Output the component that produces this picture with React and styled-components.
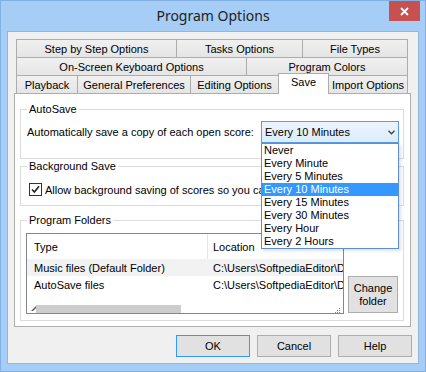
import React from "react";
import styled, { createGlobalStyle } from "styled-components";

const GlobalStyle = createGlobalStyle`
  html, body {
    margin: 0;
    padding: 0;
    width: 426px;
    height: 372px;
    overflow: hidden;
    background: #ffffff;
  }
  body {
    font-family: "Liberation Sans", Arial, sans-serif;
    font-size: 11px;
    color: #000;
  }
`;

const Shell = styled.div`
  width: 426px;
  height: 372px;
  box-sizing: border-box;
  background: #a6cdf6;
  border: 1px solid #83b0e2;
  display: flex;
  flex-direction: column;
`;

const TitleBar = styled.div`
  height: 30px;
  display: grid;
  grid-template-columns: 1fr auto 1fr;
  align-items: start;
`;

const Title = styled.div`
  grid-column: 2;
  line-height: 30px;
  font-family: "Noto Sans", "Open Sans", sans-serif;
  font-size: 14px;
  color: #222;
`;

const CloseButton = styled.div`
  grid-column: 3;
  justify-self: end;
  width: 31px;
  height: 20px;
  margin-right: 5px;
  background: #c75050;
  display: flex;
  align-items: center;
  justify-content: center;
`;

const Client = styled.div`
  flex: 1;
  margin: 0 6px 7px 6px;
  border: 1px solid #93b6de;
  background: #f0f0f0;
  padding: 7px 6px 0 6px;
  display: flex;
  flex-direction: column;
`;

const TabStrip = styled.div`
  margin: 0 4px 0 2px;
  display: flex;
  flex-direction: column;
`;

const TabRow = styled.div`
  display: flex;
  height: 18px;
`;

const Tab = styled.div`
  box-sizing: border-box;
  width: ${(p) => p.$w}px;
  height: 18px;
  border-top: 1px solid #acacac;
  border-left: 1px solid #acacac;
  &:last-child {
    border-right: 1px solid #acacac;
  }
  background: linear-gradient(#f0f0f0, #e5e5e5);
  display: flex;
  align-items: center;
  justify-content: center;
  white-space: nowrap;
`;

const ActiveTab = styled(Tab)`
  position: relative;
  z-index: 2;
  height: 21px;
  width: ${(p) => p.$w + 1}px;
  margin: -2px -1px -1px 0;
  border-right: 1px solid #acacac;
  background: #ffffff;
  align-items: flex-start;
  padding-top: 2px;
`;

const Panel = styled.div`
  box-sizing: border-box;
  height: 234px;
  margin-right: 1px;
  border: 1px solid #adadad;
  background: #ffffff;
  padding: 0 6px 0 5px;
  display: flex;
  flex-direction: column;
`;

const Group = styled.div`
  box-sizing: border-box;
  height: ${(p) => p.$h}px;
  margin-top: ${(p) => p.$top}px;
  border: 1px solid #dcdcdc;
  display: flex;
  flex-direction: column;
`;

const Legend = styled.div`
  align-self: flex-start;
  margin: -7px 0 0 6px;
  padding: 0 2px;
  line-height: 13px;
  background: #ffffff;
`;

const SaveRow = styled.div`
  margin-top: 5px;
  padding: 0 4px 0 6px;
  height: 22px;
  display: flex;
  align-items: center;
  white-space: nowrap;
`;

const SelectWrap = styled.div`
  position: relative;
  z-index: 10;
  margin-left: auto;
  width: 138px;
`;

const Select = styled.div`
  box-sizing: border-box;
  height: 22px;
  border: 1px solid #569de5;
  background: linear-gradient(#ecf4fc, #dcecfc);
  display: flex;
  align-items: center;
  justify-content: space-between;
  padding: 0 3px 0 3px;
`;

const DropList = styled.div`
  position: absolute;
  top: 100%;
  left: 0;
  width: 138px;
  box-sizing: border-box;
  border: 1px solid #5b8fd1;
  background: #ffffff;
  box-shadow: 2px 2px 3px rgba(0, 0, 0, 0.12);
`;

const DropItem = styled.div`
  height: 13px;
  line-height: 13px;
  padding-left: 2px;
  background: ${(p) => (p.$active ? "#3399ff" : "transparent")};
  color: ${(p) => (p.$active ? "#ffffff" : "#000")};
`;

const CheckRow = styled.div`
  margin-top: 10px;
  padding-left: 8px;
  display: flex;
  align-items: center;
  gap: 3px;
  white-space: nowrap;
  overflow: hidden;
`;

const CheckBox = styled.div`
  box-sizing: border-box;
  width: 13px;
  height: 13px;
  flex: none;
  border: 1px solid #333333;
  background: #ffffff;
  display: flex;
  align-items: center;
  justify-content: center;
`;

const FolderRow = styled.div`
  margin-top: 6px;
  padding-left: 5px;
  display: flex;
  align-items: flex-end;
  gap: 4px;
`;

const ListView = styled.div`
  box-sizing: border-box;
  width: 318px;
  height: 81px;
  border: 1px solid #828790;
  background: #ffffff;
  display: flex;
  flex-direction: column;
  overflow: hidden;
`;

const ListLine = styled.div`
  display: grid;
  grid-template-columns: 181px 1fr;
  height: ${(p) => p.$h}px;
  background: ${(p) => (p.$shade ? "#f2f2f2" : "transparent")};
  align-items: center;
  white-space: nowrap;
`;

const Cell = styled.div`
  box-sizing: border-box;
  height: 100%;
  display: flex;
  align-items: center;
  overflow: hidden;
  padding-left: ${(p) => (p.$first ? 7 : 5)}px;
  border-right: ${(p) => (p.$divider ? "1px solid #e5e5e5" : "none")};
`;

const ListFill = styled.div`
  flex: 1;
`;

const HScroll = styled.div`
  height: 8px;
  display: flex;
  align-items: stretch;
`;

const ScrollArrow = styled.div`
  width: 9px;
  display: flex;
  align-items: flex-start;
  justify-content: flex-end;
  padding-top: 1px;
`;

const ScrollThumb = styled.div`
  width: 145px;
  background: #cdcdcd;
`;

const ScrollTrack = styled.div`
  flex: 1;
  background: #ffffff;
`;

const Grip = styled.div`
  width: 8px;
  display: flex;
  align-items: flex-end;
`;

const PushButton = styled.div`
  box-sizing: border-box;
  width: ${(p) => p.$w}px;
  height: ${(p) => p.$h}px;
  margin-bottom: ${(p) => p.$mb || 0}px;
  border: 1px solid ${(p) => (p.$default ? "#3399ff" : "#adadad")};
  background: #e1e1e1;
  display: flex;
  flex-direction: column;
  align-items: center;
  justify-content: center;
  line-height: 13px;
  text-align: center;
`;

const ButtonBar = styled.div`
  margin-top: 8px;
  display: flex;
  justify-content: flex-end;
  gap: 7px;
`;

const intervals = [
  "Never",
  "Every Minute",
  "Every 5 Minutes",
  "Every 10 Minutes",
  "Every 15 Minutes",
  "Every 30 Minutes",
  "Every Hour",
  "Every 2 Hours",
];

const tabRows = [
  [
    ["Step by Step Options", 160],
    ["Tasks Options", 126],
    ["File Types", 106],
  ],
  [
    ["On-Screen Keyboard Options", 230],
    ["Program Colors", 162],
  ],
  [
    ["Playback", 61],
    ["General Preferences", 113],
    ["Editing Options", 88],
    ["Save", 50, true],
    ["Import Options", 80],
  ],
];

const folders = [
  ["Music files (Default Folder)", "C:\\Users\\SoftpediaEditor\\Documents\\Finale NotePad"],
  ["AutoSave files", "C:\\Users\\SoftpediaEditor\\Documents\\AutoSave"],
];

export default function App() {
  return (
    <>
      <GlobalStyle />
      <Shell>
        <TitleBar>
          <Title>Program Options</Title>
          <CloseButton>
            <svg width="9" height="9" viewBox="0 0 9 9">
              <path d="M1 1L8 8M8 1L1 8" stroke="#fff" strokeWidth="1.8" />
            </svg>
          </CloseButton>
        </TitleBar>
        <Client>
          <TabStrip>
            {tabRows.map((row, i) => (
              <TabRow key={i}>
                {row.map(([label, w, active]) =>
                  active ? (
                    <ActiveTab key={label} $w={w}>
                      {label}
                    </ActiveTab>
                  ) : (
                    <Tab key={label} $w={w}>
                      {label}
                    </Tab>
                  )
                )}
              </TabRow>
            ))}
          </TabStrip>
          <Panel>
            <Group $h={50} $top={15}>
              <Legend>AutoSave</Legend>
              <SaveRow>
                Automatically save a copy of each open score:
                <SelectWrap>
                  <Select>
                    <span>Every 10 Minutes</span>
                    <svg width="7" height="5" viewBox="0 0 7 5">
                      <path d="M0.5 0.8L3.5 3.8L6.5 0.8" fill="none" stroke="#444" strokeWidth="1.4" />
                    </svg>
                  </Select>
                  <DropList>
                    {intervals.map((t) => (
                      <DropItem key={t} $active={t === "Every 10 Minutes"}>
                        {t}
                      </DropItem>
                    ))}
                  </DropList>
                </SelectWrap>
              </SaveRow>
            </Group>
            <Group $h={40} $top={7}>
              <Legend>Background Save</Legend>
              <CheckRow>
                <CheckBox>
                  <svg width="9" height="9" viewBox="0 0 9 9">
                    <path d="M1 4.5L3.4 7L8 1.2" fill="none" stroke="#222" strokeWidth="1.6" />
                  </svg>
                </CheckBox>
                Allow background saving of scores so you can continue working
              </CheckRow>
            </Group>
            <Group $h={101} $top={14}>
              <Legend>Program Folders</Legend>
              <FolderRow>
                <ListView>
                  <ListLine $h={25}>
                    <Cell $first $divider>Type</Cell>
                    <Cell>Location</Cell>
                  </ListLine>
                  {folders.map(([type, loc], i) => (
                    <ListLine key={type} $h={17} $shade={i === 0}>
                      <Cell $first>{type}</Cell>
                      <Cell>{loc}</Cell>
                    </ListLine>
                  ))}
                  <ListFill />
                  <HScroll>
                    <ScrollArrow>
                      <svg width="5" height="5" viewBox="0 0 5 5">
                        <path d="M0 5L5 0L5 2L2 5Z" fill="#555" />
                      </svg>
                    </ScrollArrow>
                    <ScrollThumb />
                    <ScrollTrack />
                    <Grip>
                      <svg width="6" height="6" viewBox="0 0 6 6">
                        <rect x="4" y="1" width="1" height="1" fill="#888" />
                        <rect x="2" y="3" width="1" height="1" fill="#888" />
                        <rect x="4" y="3" width="1" height="1" fill="#888" />
                        <rect x="0" y="5" width="1" height="1" fill="#888" />
                        <rect x="2" y="5" width="1" height="1" fill="#888" />
                        <rect x="4" y="5" width="1" height="1" fill="#888" />
                      </svg>
                    </Grip>
                  </HScroll>
                </ListView>
                <PushButton $w={50} $h={37} $mb={1}>
                  <span>Change</span>
                  <span>folder</span>
                </PushButton>
              </FolderRow>
            </Group>
          </Panel>
          <ButtonBar>
            <PushButton $w={74} $h={22} $default>OK</PushButton>
            <PushButton $w={74} $h={22}>Cancel</PushButton>
            <PushButton $w={74} $h={22}>Help</PushButton>
          </ButtonBar>
        </Client>
      </Shell>
    </>
  );
}
